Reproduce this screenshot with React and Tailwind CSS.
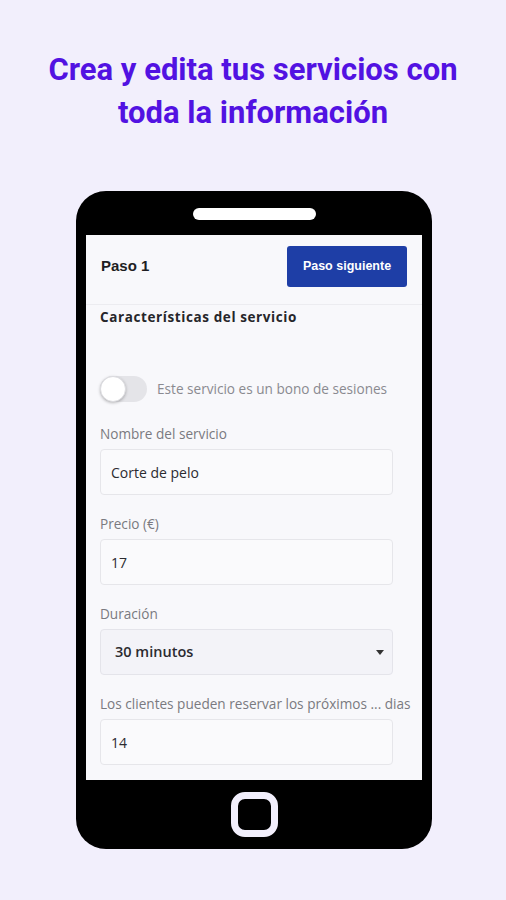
import React from "react";

// --- campos del formulario ---
const fields = [
  { label: "Nombre del servicio", value: "Corte de pelo" },
  { label: "Precio (€)", value: "17" },
];

function Toggle() {
  return (
    <div className="relative h-[26px] w-[47px] rounded-full bg-[#e4e4e8]">
      <div className="absolute left-0 top-0 h-[26px] w-[26px] rounded-full border border-[#dcdce0] bg-white shadow-[0_1px_3px_rgba(0,0,0,0.25)]" />
    </div>
  );
}

function Field({ label, value }) {
  return (
    <div>
      <div className="flex h-[20px] items-center text-[13.6px] text-[#7a7a80]">{label}</div>
      <div className="mt-[5px] flex h-[46px] w-[293px] items-center rounded-[4px] border border-[#e6e6ea] bg-[#fafafc] pl-[10px] text-[14px] text-[#2b2b30]">
        {value}
      </div>
    </div>
  );
}

export default function App() {
  return (
    <div
      className="h-[900px] w-[506px] overflow-hidden bg-[#f2effc]"
      style={{ fontFamily: "'Open Sans', sans-serif" }}
    >
      {/* --- titulo --- */}
      <h1
        className="pt-[48px] text-center text-[31px] font-bold leading-[43px] text-[#5212e2]"
        style={{ fontFamily: "Roboto, sans-serif" }}
      >
        Crea y edita tus servicios con
        <br />
        toda la información
      </h1>

      {/* --- telefono --- */}
      <div className="ml-[76px] mt-[57px] flex h-[658px] w-[356px] flex-col rounded-[30px] bg-black px-[10px]">
        <div className="flex h-[44px] justify-center pt-[17px]">
          <div className="h-[12px] w-[123px] rounded-full bg-white" />
        </div>

        <div className="h-[545px] overflow-hidden bg-[#f8f8fb]">
          {/* cabecera */}
          <div className="flex h-[70px] items-start justify-between border-b border-[#ececf0] pl-[15px] pr-[15px] pt-[11px]">
            <span
              className="flex h-[41px] items-center text-[15px] font-bold text-[#1e1e22]"
              style={{ fontFamily: "'Liberation Sans', Arial, sans-serif" }}
            >
              Paso 1
            </span>
            <button
              className="h-[41px] w-[120px] rounded-[3px] bg-[#1e3ea6] text-[12.5px] font-bold text-white"
              style={{ fontFamily: "'Liberation Sans', Arial, sans-serif" }}
            >
              Paso siguiente
            </button>
          </div>

          <div className="pl-[14px]">
            <div className="mt-[4px] flex h-[16px] items-center text-[13.5px] font-bold tracking-[0.6px] text-[#26262a]">
              Características del servicio
            </div>

            <div className="mt-[51px] flex items-center gap-[10px]">
              <Toggle />
              <span className="text-[13.6px] text-[#8a8a90]">Este servicio es un bono de sesiones</span>
            </div>

            <div className="mt-[22px] flex flex-col gap-[19px]">
              {fields.map((f) => (
                <Field key={f.label} label={f.label} value={f.value} />
              ))}

              <div>
                <div className="flex h-[20px] items-center text-[13.6px] text-[#7a7a80]">Duración</div>
                <div className="mt-[5px] flex h-[46px] w-[293px] items-center justify-between rounded-[4px] border border-[#e4e4ea] bg-[#f3f3f8] pl-[14px] pr-[8px] text-[14.5px] font-semibold text-[#2b2b30]">
                  <span>30 minutos</span>
                  <svg width="8" height="5" viewBox="0 0 8 5">
                    <path d="M0 0h8L4 5z" fill="#333" />
                  </svg>
                </div>
              </div>

              <Field label="Los clientes pueden reservar los próximos ... dias" value="14" />
            </div>
          </div>
        </div>

        {/* boton de inicio */}
        <div className="flex flex-1 items-start justify-center pt-[12px]">
          <div className="h-[45px] w-[47px] rounded-[14px] border-[7px] border-[#f2effc] bg-black" />
        </div>
      </div>
    </div>
  );
}
